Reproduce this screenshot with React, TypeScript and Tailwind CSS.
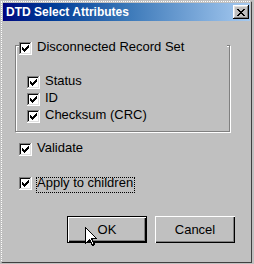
import React from 'react';

const font = { fontFamily: '"Liberation Sans", Arial, sans-serif' };

const Check: React.FC = () => (
  <svg width="7" height="7" viewBox="0 0 7 7" shapeRendering="crispEdges">
    <path
      fill="#000"
      d="M6 0h1v1h-1z M5 1h2v1h-2z M0 2h1v1h-1z M4 2h3v1h-3z M0 3h2v1h-2z M3 3h3v1h-3z M0 4h5v1h-5z M1 5h3v1h-3z M2 6h1v1h-1z"
    />
  </svg>
);

const CheckBox: React.FC = () => (
  <div className="w-[13px] h-[13px] shrink-0 bg-white flex items-center justify-center shadow-[inset_-1px_-1px_0_#fff,inset_1px_1px_0_#808080,inset_-2px_-2px_0_#dfdfdf,inset_2px_2px_0_#0a0a0a]">
    <Check />
  </div>
);

const Row: React.FC<{ label: string; className?: string }> = ({ label, className = '' }) => (
  <div className={`flex items-start gap-[5px] h-[13px] ${className}`}>
    <CheckBox />
    <span className="text-[13px] leading-[9px] text-black whitespace-nowrap">{label}</span>
  </div>
);

export default function App() {
  return (
    <div className="w-[254px] h-[264px] bg-[#c0c0c0] pl-[1px] pt-[1px]" style={font}>
      <div className="relative w-[251px] h-[262px] p-[1px] border border-dotted border-white [border-right-style:solid] [border-bottom-style:solid] border-r-[#404040] border-b-[#404040]">
        {/* Title bar */}
        <div className="h-[18px] flex items-center justify-between bg-linear-to-r from-[#000080] via-[#3a78b8] to-[#a6caf0]">
          <span className="ml-[3px] text-white font-bold text-[12px] leading-none">DTD Select Attributes</span>
          <button className="mr-[1px] w-[16px] h-[14px] bg-[#c0c0c0] flex items-center justify-center shadow-[inset_-1px_-1px_0_#000,inset_1px_1px_0_#fff,inset_-2px_-2px_0_#808080,inset_2px_2px_0_#dfdfdf]">
            <svg width="8" height="7" viewBox="0 0 8 7" shapeRendering="crispEdges">
              <path
                fill="#000"
                d="M0 0h2v1h-2z M6 0h2v1h-2z M1 1h2v1h-2z M5 1h2v1h-2z M2 2h4v1h-4z M3 3h2v1h-2z M2 4h4v1h-4z M1 5h2v1h-2z M5 5h2v1h-2z M0 6h2v1h-2z M6 6h2v1h-2z"
              />
            </svg>
          </button>
        </div>

        {/* Group box */}
        <div className="ml-[12px] mt-[24px] w-[215px] h-[87px] border border-[#808080] shadow-[1px_1px_0_#fff,inset_1px_1px_0_#fff]">
          <div className="-mt-[4px] ml-[3px] w-[208px] bg-[#c0c0c0]">
            <Row label="Disconnected Record Set" />
          </div>
          <div className="ml-[11px] mt-[21px] flex flex-col gap-[4px]">
            <Row label="Status" />
            <Row label="ID" />
            <Row label="Checksum (CRC)" />
          </div>
        </div>

        <Row label="Validate" className="ml-[16px] mt-[11px]" />

        <div className="ml-[16px] mt-[21px] flex items-start gap-[4px] h-[13px]">
          <CheckBox />
          <span className="h-[16px] border border-dotted border-black pr-[1px] text-[13px] leading-[10px] text-black whitespace-nowrap">
            Apply to children
          </span>
        </div>

        {/* Buttons */}
        <div className="mt-[26px] flex justify-end gap-[8px] pr-[15px]">
          <button className="w-[80px] h-[27px] border border-black bg-[#c0c0c0] text-[13px] text-black flex items-center justify-center shadow-[inset_1px_1px_0_#fff,inset_-1px_-1px_0_#000,inset_-2px_-2px_0_#808080]">
            OK
          </button>
          <button className="w-[80px] h-[27px] bg-[#c0c0c0] text-[13px] text-black flex items-center justify-center shadow-[inset_1px_1px_0_#fff,inset_-1px_-1px_0_#000,inset_-2px_-2px_0_#808080]">
            Cancel
          </button>
        </div>

        {/* Mouse cursor over OK */}
        <svg className="absolute left-[83px] top-[225px]" width="13" height="20" viewBox="0 0 13 20" shapeRendering="crispEdges">
          <path
            d="M0.5 0.5 V16.5 L4.5 12.5 L7.5 18.5 L9.5 17.5 L6.5 11.5 H11.5 Z"
            fill="#fff"
            stroke="#000"
            strokeWidth="1"
          />
        </svg>
      </div>
    </div>
  );
}
